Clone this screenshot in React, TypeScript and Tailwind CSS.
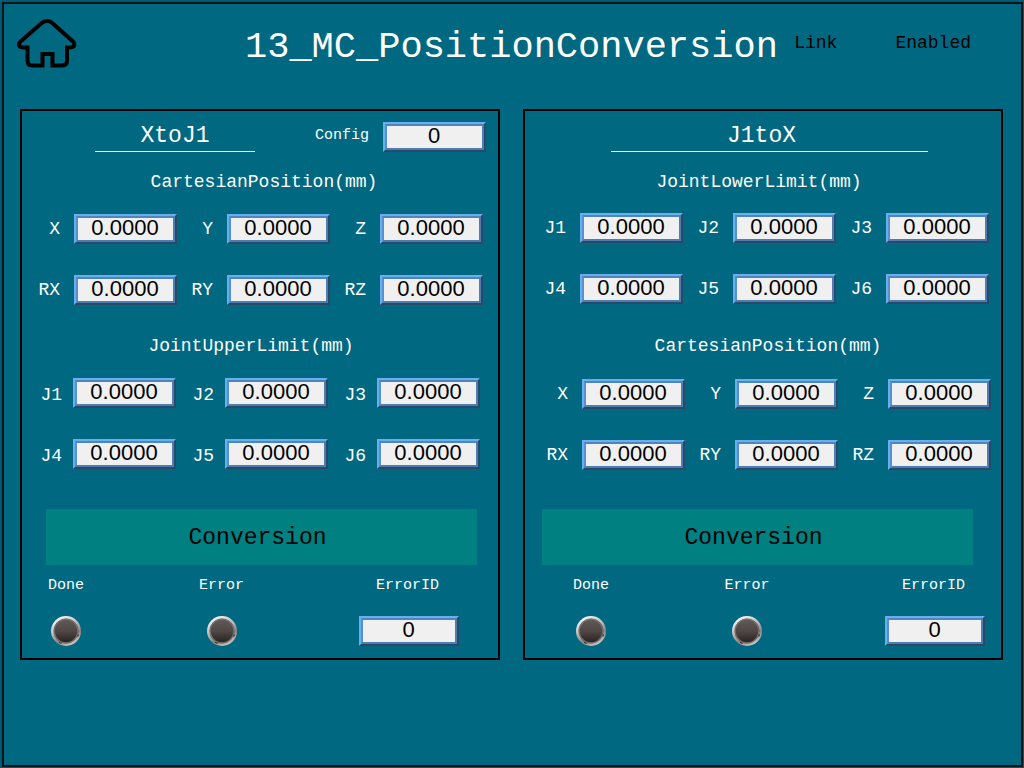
import { useId } from "react";

const axes = ["X", "Y", "Z", "RX", "RY", "RZ"];
const joints = ["J1", "J2", "J3", "J4", "J5", "J6"];

function NumberField({ id, value, className }: { id: string; value: string; className: string }) {
  return (
    <span
      className={`block h-[30px] border-2 border-t-[#68aef0] border-l-[#68aef0] border-r-[#2b4966] border-b-[#2b4966] ${className}`}
    >
      <input
        id={id}
        type="text"
        inputMode="decimal"
        defaultValue={value}
        className="block h-full w-full min-w-0 border-2 border-t-[#4f86ba] border-l-[#5890cc] border-r-[#4a7fb3] border-b-[#4a7fb3] bg-[#f0f0f0] p-0 pr-px pb-0.5 text-center font-['Liberation_Sans',sans-serif] text-[22px] leading-[20px] text-black outline-none"
      />
    </span>
  );
}

function FieldGroup({
  title,
  labels,
  titleClass,
  gridClass,
  cellClass,
  labelClass = "",
}: {
  title: string;
  labels: string[];
  titleClass: string;
  gridClass: string;
  cellClass: string;
  labelClass?: string;
}) {
  const id = useId();
  return (
    <section>
      <h3 className={`flex items-center justify-center text-lg text-white ${titleClass}`}>{title}</h3>
      <div className={`grid grid-cols-3 gap-y-[31px] ${gridClass}`}>
        {labels.map((label) => (
          <div key={label} className={`flex items-center ${cellClass}`}>
            <label htmlFor={`${id}-${label}`} className={`w-[22px] shrink-0 text-right text-lg leading-6 text-white ${labelClass}`}>
              {label}
            </label>
            <NumberField id={`${id}-${label}`} value="0.0000" className="min-w-0 flex-1" />
          </div>
        ))}
      </div>
    </section>
  );
}

function Lamp({ label }: { label: string }) {
  const id = useId();
  return (
    <div className="flex flex-col items-center gap-[18px]">
      <span className="text-[15px] leading-6 text-white">{label}</span>
      <svg className="size-[30px]" viewBox="0 0 30 30" aria-hidden="true">
        <defs>
          <linearGradient id={`${id}-rim`} x1="0.2" y1="0" x2="0.7" y2="1">
            <stop offset="0" stopColor="#ffffff" />
            <stop offset="0.4" stopColor="#c4c2c0" />
            <stop offset="0.7" stopColor="#8a8583" />
            <stop offset="1" stopColor="#d2d0ce" />
          </linearGradient>
          <linearGradient id={`${id}-face`} x1="0" y1="0" x2="0" y2="1">
            <stop offset="0" stopColor="#5f5957" />
            <stop offset="0.5" stopColor="#4f4846" />
            <stop offset="1" stopColor="#2b2321" />
          </linearGradient>
        </defs>
        <circle cx="15" cy="15" r="15" fill={`url(#${id}-rim)`} />
        <circle cx="15" cy="15" r="12.3" fill="#807b79" stroke="#5a5452" strokeWidth="0.6" />
        <circle cx="15" cy="15" r="11.2" fill={`url(#${id}-face)`} />
        <path d="M8 26.3l2.6 1.2M26.6 20.4l1-2" stroke="#3a3230" strokeWidth="1.2" />
      </svg>
    </div>
  );
}

function Status({ className }: { className: string }) {
  const id = useId();
  return (
    <div className={`flex justify-between pt-[9px] pb-3 ${className}`}>
      <Lamp label="Done" />
      <Lamp label="Error" />
      <div className="flex flex-col items-center gap-[18px]">
        <label htmlFor={id} className="pr-[3px] text-[15px] leading-6 text-white">
          ErrorID
        </label>
        <NumberField id={id} value="0" className="w-[100px]" />
      </div>
    </div>
  );
}

function ConversionButton({ className }: { className: string }) {
  return (
    <button type="button" className={`h-14 bg-[#008080] pt-0.5 pr-2 text-[23px] text-black ${className}`}>
      Conversion
    </button>
  );
}

function HomeIcon() {
  return (
    <svg className="h-[52px] w-[62px]" viewBox="0 0 62 52" fill="none" stroke="#000" strokeWidth="4" aria-hidden="true">
      <path d="M26 4.8Q31 1.2 36 4.8L57 23.5Q59.5 26.5 57.5 28.6Q56.5 29.5 54.5 29.5H51V42.5Q51 47.5 46 47.5H36.5V36H26.5V47.5H16Q11.5 47.5 11.5 42.5V29.5H7Q5 29.5 4 28.6Q1.5 26.5 4.5 23.5Z" />
    </svg>
  );
}

export default function App() {
  return (
    <main className="min-h-screen border-t-2 border-r border-b border-l-2 border-[#005a72] bg-[#006880] font-['Liberation_Mono',monospace] shadow-[inset_0_0_0_2px_#00141a]">
      <header className="flex h-[107px] items-start pt-4 pr-[52px] pl-[14px]">
        <button type="button" aria-label="Home" className="shrink-0">
          <HomeIcon />
        </button>
        <h1 className="min-w-0 flex-1 pl-[167px] text-[37px] leading-[58px] whitespace-nowrap text-white">13_MC_PositionConversion</h1>
        <div className="flex gap-[58px] pt-[11px] text-lg leading-7 text-black">
          <span>Link</span>
          <span>Enabled</span>
        </div>
      </header>

      <div className="grid grid-cols-2 gap-[23px] pr-5 pb-8 pl-[18px]">
        <section className="flex flex-col border-2 border-black">
          <div className="flex items-end justify-between pt-[10px] pr-3 pl-[73px]">
            <h2 className="w-40 border-b border-white text-center text-[23px] leading-[30px] text-white">XtoJ1</h2>
            <div className="flex items-center gap-[14px]">
              <label htmlFor="config" className="pb-0.5 text-[15px] leading-6 text-white">
                Config
              </label>
              <NumberField id="config" value="0" className="w-[103px]" />
            </div>
          </div>
          <FieldGroup
            title="CartesianPosition(mm)"
            labels={axes}
            titleClass="h-[62px] pb-0.5 pl-2"
            gridClass="gap-x-[14px] pr-[15px] pl-4"
            cellClass="gap-[14px]"
          />
          <FieldGroup
            title="JointUpperLimit(mm)"
            labels={joints}
            titleClass="mt-[9px] h-16 pr-[18px]"
            gridClass="gap-x-4 pr-[18px] pl-[18px]"
            cellClass="gap-[11px]"
            labelClass="pt-1"
          />
          <ConversionButton className="mt-10 mr-[21px] ml-6" />
          <Status className="pr-[39px] pl-[26px]" />
        </section>

        <section className="flex flex-col border-2 border-black">
          <div className="pt-[10px] pr-[73px] pl-[86px]">
            <h2 className="border-b border-white pr-4 text-center text-[23px] leading-[30px] text-white">J1toX</h2>
          </div>
          <FieldGroup
            title="JointLowerLimit(mm)"
            labels={joints}
            titleClass="h-[61px] pr-2 pb-0.5"
            gridClass="gap-x-[14px] pr-3 pl-[19px]"
            cellClass="gap-[14px]"
          />
          <FieldGroup
            title="CartesianPosition(mm)"
            labels={axes}
            titleClass="mt-[9px] h-[66px] pl-[10px]"
            gridClass="gap-x-[14px] pr-[10px] pl-[21px]"
            cellClass="gap-[14px]"
          />
          <ConversionButton className="mt-[39px] mr-7 ml-[17px]" />
          <Status className="pr-4 pl-12" />
        </section>
      </div>
    </main>
  );
}
